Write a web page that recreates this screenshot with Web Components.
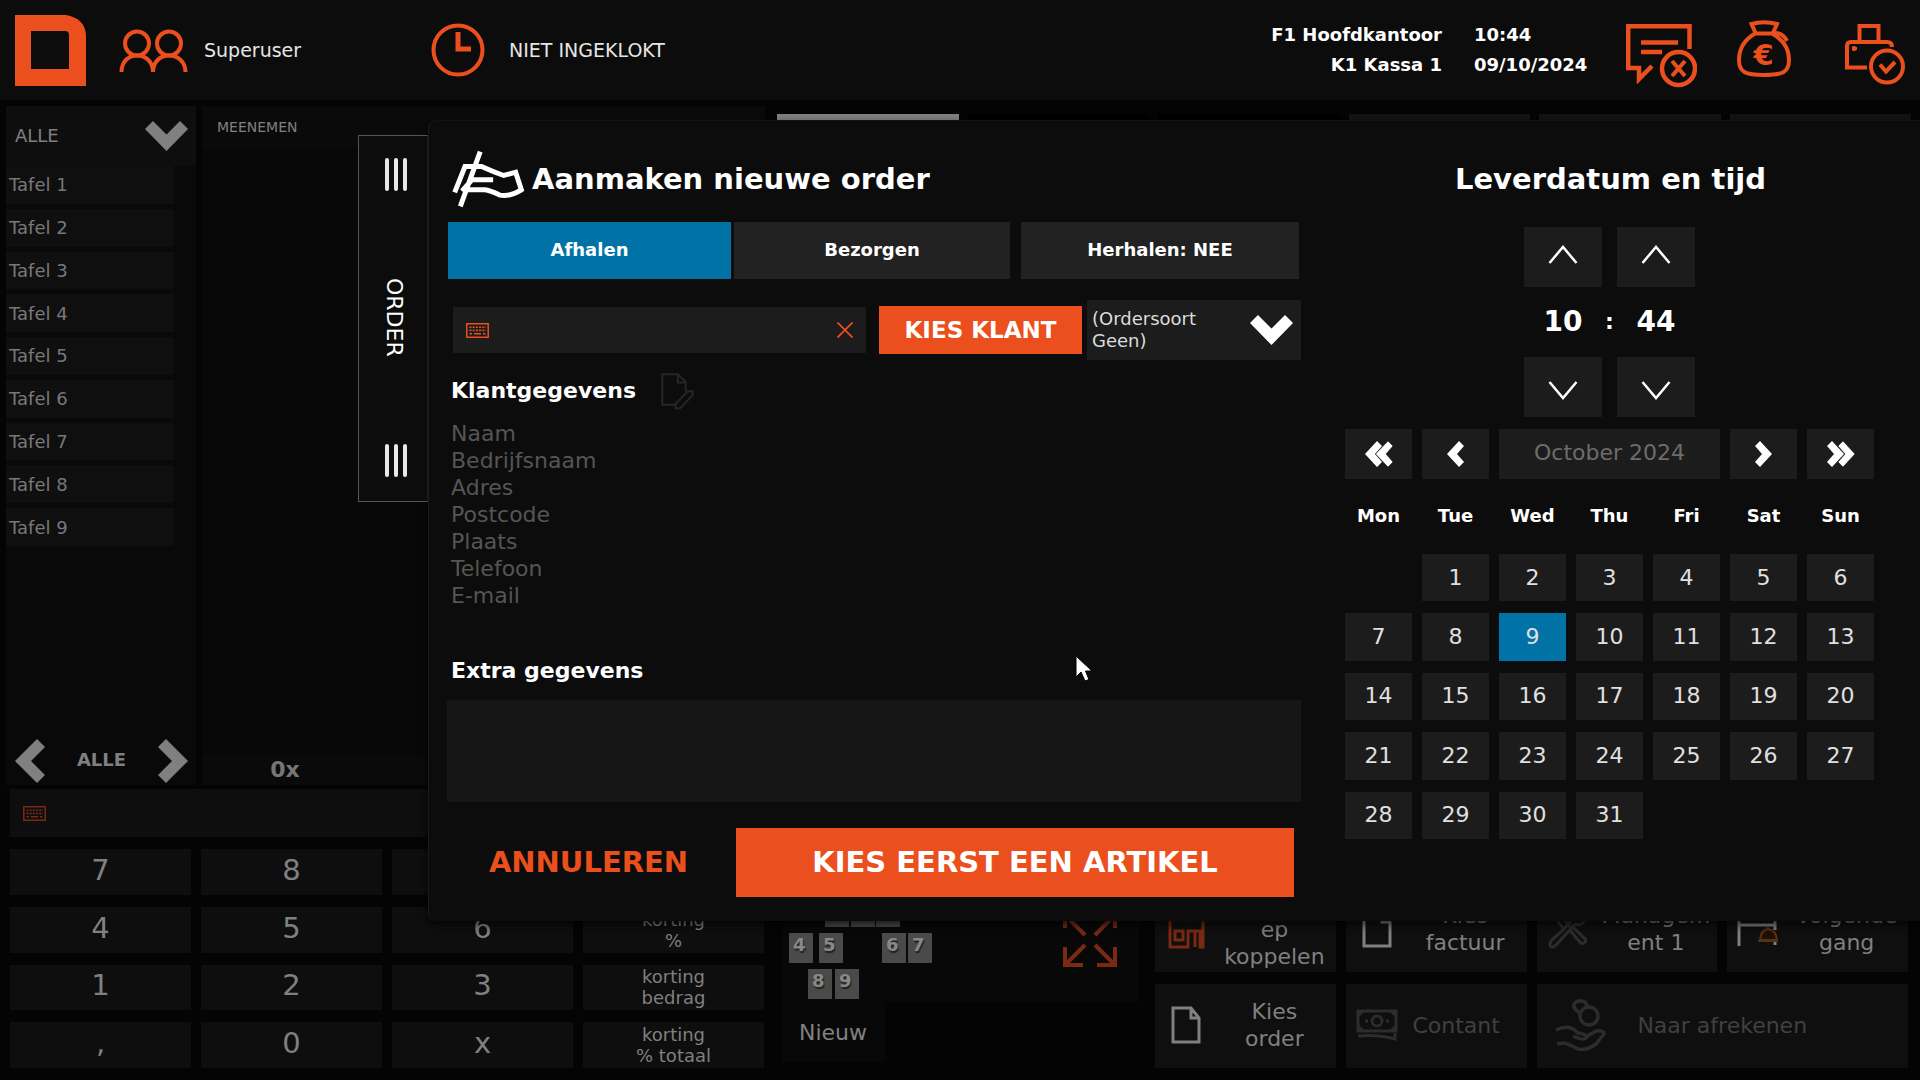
<!DOCTYPE html>
<html lang="nl">
<head>
<meta charset="utf-8">
<title>Kassa</title>
<style>
html,body{margin:0;height:100%;background:#040404;overflow:hidden}
body{font-family:Verdana,"DejaVu Sans",sans-serif;font-size:18px;color:#fff}
</style>
</head>
<body>
<pos-app></pos-app>
<script>
const BASE = `*{box-sizing:border-box}
button,input,select,textarea{font:inherit;color:inherit;border:0;border-radius:0;margin:0;padding:0;background:none;outline:0;appearance:none;min-width:0}
h2,h3,p,ul{margin:0;padding:0;font-weight:inherit;list-style:none}`;

function define(name, css, html) {
  const t = document.createElement('template');
  const make = v => { t.innerHTML = '<style>' + BASE + css + '</style>' + v; return t.content.cloneNode(true); };
  customElements.define(name, class extends HTMLElement {
    constructor() {
      super();
      this.attachShadow({ mode: 'open' });
    }
    connectedCallback() {
      if (!this.shadowRoot.childNodes.length)
        this.shadowRoot.append(make(typeof html === 'function' ? html(this) : html));
    }
  });
}

/* name: [width, height, viewBox, markup] */
const page = '<path fill="none" stroke="currentColor" stroke-width="3" d="M2 2H20L28 12V36H2ZM20 2V12H28"/>';
const kb = '<path fill="none" stroke="currentColor" stroke-width="1.5" d="M.8.8H22.2V14.2H.8Z"/><path stroke="currentColor" stroke-width="1.6" stroke-dasharray="2 1.2" d="M3.5 4.2H20M3.5 7.4H20"/><path stroke="currentColor" stroke-width="1.6" d="M3.5 10.8H6M8 10.8H15M17 10.8H19.5"/>';
const ICONS = {
  logo: [71, 71, '0 0 71 71', '<path fill="currentColor" fill-rule="evenodd" d="M0 0H51C63 2 71 9 71 21V71H0ZM16 16V54H54V20Q54 16 50 16Z"/>'],
  users: [69, 43, '119 28 69 43', '<g fill="none" stroke="currentColor" stroke-width="4"><circle cx="137" cy="42.500" r="12"/><circle cx="169" cy="42.500" r="12"/><path d="M121.500 71C121.500 61 128 54.500 137 54.500S153 61 153 71C153 61 160 54.500 169 54.500S185.500 61 185.500 71"/></g>'],
  clock: [54, 54, '0 0 54 54', '<g fill="none" stroke="currentColor" stroke-width="4"><circle cx="27" cy="27" r="24.500"/><path stroke-width="5" d="M27 9V26H40"/></g>'],
  message: [71, 68, '1626 20 71 68', '<g fill="none" stroke="currentColor" stroke-width="4.500"><path d="M1689.500 49V26.200H1628.200V68H1639V79L1652 66M1641 42.500H1678M1641 52H1662"/><circle cx="1678.500" cy="68.500" r="16.500"/><path stroke-width="4" d="M1672 61L1685 76M1685 61L1672 76"/></g>'],
  bag: [56, 68, '1736 20 56 68', '<g fill="none" stroke="currentColor" stroke-width="4"><path d="M1756 34L1751.500 24Q1764 20.500 1777 24L1772.500 34"/><path d="M1755 33.500H1772C1784 40 1789 50 1789 60C1789 72 1783 75 1764 75S1739 72 1739 60C1739 50 1744 40 1755 33.500ZM1772 33.500Q1782 31 1787 41"/></g><text x="1763.500" y="65" text-anchor="middle" font-size="29" font-weight="700" fill="currentColor">€</text>'],
  printer: [60, 68, '1845 20 60 68', '<g fill="none" stroke="currentColor" stroke-width="4"><path d="M1859.500 41V26H1878.500V41M1867 67.500H1847V46Q1847 42 1851 42H1887Q1892 42 1892 47"/><path stroke-width="3" d="M1854 46V51M1852 48.500H1857"/><circle cx="1887" cy="66.500" r="16"/><path d="M1880 64.500L1886 71.500L1895 62"/></g>'],
  down: [43, 30, '0 0 43 30', '<path fill="currentColor" d="M0 8L8 0L21.500 13.500L35 0L43 8L21.500 30Z"/>'],
  left: [30, 44, '0 0 30 44', '<path fill="currentColor" d="M22 0L30 8L16 22L30 36L22 44L0 22Z"/>'],
  right: [30, 44, '0 0 30 44', '<path fill="currentColor" d="M8 0L0 8L14 22L0 36L8 44L30 22Z"/>'],
  prev: [17, 26, '0 0 17 26', '<path fill="currentColor" d="M12 0L17 5L10 13L17 21L12 26L0 13Z"/>'],
  next: [17, 26, '0 0 17 26', '<path fill="currentColor" d="M5 0L0 5L7 13L0 21L5 26L17 13Z"/>'],
  first: [28, 26, '0 0 28 26', '<path fill="currentColor" d="M12 0L17 5L10 13L17 21L12 26L0 13Z"/><path fill="currentColor" stroke="#1c1c1c" stroke-width=".6" d="M23 0L28 5L21 13L28 21L23 26L10.500 13Z"/>'],
  last: [28, 26, '0 0 28 26', '<path fill="currentColor" d="M5 0L0 5L7 13L0 21L5 26L17 13Z"/><path fill="currentColor" stroke="#1c1c1c" stroke-width=".6" d="M16 0L11 5L18 13L11 21L16 26L28 13Z"/>'],
  up: [30, 20, '0 0 30 20', '<path fill="none" stroke="currentColor" stroke-width="2.500" d="M1.500 18L15 2L28.500 18"/>'],
  dn: [30, 20, '0 0 30 20', '<path fill="none" stroke="currentColor" stroke-width="2.500" d="M1.500 2L15 18L28.500 2"/>'],
  keyboard: [23, 15, '0 0 23 15', kb],
  cross: [16, 16, '0 0 16 16', '<path fill="none" stroke="currentColor" stroke-width="1.700" d="M.5.500L15.500 15.500M15.500.500L.5 15.500"/>'],
  order: [73, 58, '66 120 220 175', '<g fill="none" stroke="currentColor" stroke-width="15"><path d="M151 125L91 290M74 248L105 170H155Q190 186 222 197L258 187L275 240Q240 262 210 256Q180 242 165 240H108M96 244L126 210H190"/></g>'],
  edit: [33, 37, '690 40 100 110', '<g fill="none" stroke="currentColor" stroke-width="6"><path d="M732 135H694V43H741L765 66V96M741 43V68H765"/><path d="M734 146V132L772 94H786V106L748 146Z"/></g>'],
  page: [30, 38, '0 0 30 38', page],
  shop: [44, 40, '0 0 44 40', '<g fill="none" stroke="currentColor" stroke-width="3"><path d="M6 10V38H24V22H36V38H39V10M31 22V38M11 22H19V31H11ZM2 2H42V8q-3 5-6 1q-3 4-6 0q-3 4-6 0q-3 4-6 0q-3 4-6 0q-3 4-6 0q-4 3-4-1Z"/></g>'],
  tools: [40, 40, '0 0 40 40', '<g fill="none" stroke="currentColor" stroke-width="3"><path d="M15 19L4 5Q7 0 11 5L22 18M21 20L30 31Q35 37 37 33T36 29L25 18M15 21L3 32Q0 38 5 38L8 36L27 15Q35 18 38 8L32 11L29 8L33 2Q24 1 23 12Z"/></g>'],
  serve: [44, 34, '0 0 44 34', '<path fill="none" stroke="currentColor" stroke-width="3" d="M3 34V2M3 13H39M39 2V18M3 7H39V13M39 28V33"/><path fill="#1c1109" stroke="#5b3011" stroke-width="2" d="M22 29H42M24 28Q25 18 32 17Q40 18 41 28ZM32 14V17"/>'],
  cash: [42, 33, '0 0 42 33', '<g fill="none" stroke="currentColor" stroke-width="3"><path d="M2 2H40V22H2ZM2 27Q22 25 39 30V24M2 7L7 2M35 2L40 7M2 17L7 22M35 22L40 17"/><circle cx="21" cy="12" r="5"/><path d="M9 12H12M30 12H33"/></g>'],
  pay: [52, 52, '0 0 52 52', '<g fill="none" stroke="currentColor" stroke-width="3.500"><circle cx="35" cy="17" r="9"/><path d="M25 13Q19 10 20 5Q24 0 31 3L34 8M25 13L26 16M2 31Q12 26 19 30L24 34Q33 35 32 39Q30 42 19 37M32 38L42 32Q50 31 50 35L42 45Q32 52 24 50Q15 45 10 44L3 45"/></g>'],
  expand: [54, 54, '0 0 54 54', '<g fill="none" stroke="currentColor" stroke-width="4"><path d="M2 15V2H20M2 2L22 22M34 2H52V15M52 2L32 22M2 34V52H20M2 52L22 32M52 34V52H34M52 52L32 32"/></g>'],
  cursor: [18, 27, '0 0 18 27', '<path fill="#fff" stroke="#000" stroke-width="1" d="M1 1V22L6 17L10 26L14 24.500L10.500 16H17Z"/>'],
};
define('pos-icon', `:host{display:block;flex:none}svg{display:block}`, el => {
  const [w, h, vb, m] = ICONS[el.getAttribute('name')];
  return `<svg width="${w}" height="${h}" viewBox="${vb}" aria-hidden="true">${m}</svg>`;
});

define('pos-header', `
:host{display:flex;align-items:center;background:#0c0c0c;padding:0 15px;font-size:19px;color:#e6e6e6}
pos-icon{color:#ea4f1d}
.g{display:flex;align-items:center}
.user{gap:16px;width:312px;margin-left:33px}
.clock{gap:24px}
.info{margin-left:auto;display:grid;grid-template-columns:auto 130px;column-gap:32px;font:700 18px/30px Verdana,"DejaVu Sans",sans-serif;color:#fff;margin-right:22px}
.info :nth-child(odd){text-align:right}
button{display:block;color:inherit}
.act{padding-top:8px}
.act button+button{margin-left:39px}
.act button:last-child{margin-left:53px}`,
`<pos-icon name="logo"></pos-icon>
<div class="g user"><pos-icon name="users"></pos-icon><span>Superuser</span></div>
<div class="g clock"><pos-icon name="clock"></pos-icon><span>NIET INGEKLOKT</span></div>
<div class="info"><span>F1 Hoofdkantoor</span><span>10:44</span><span>K1 Kassa 1</span><span>09/10/2024</span></div>
<div class="g act"><button aria-label="Berichten"><pos-icon name="message"></pos-icon></button><button aria-label="Kas"><pos-icon name="bag"></pos-icon></button><button aria-label="Printer"><pos-icon name="printer"></pos-icon></button></div>`);

define('pos-select', `
:host{display:grid;align-items:center}
select,pos-icon{grid-area:1/1}
select{width:100%;height:100%;white-space:normal;line-height:22px;padding:0 80px 0 var(--pad,5px);background:none}
option{background:#1c1c1c}
pos-icon{justify-self:end;margin-right:8px;pointer-events:none;color:var(--arrow,inherit)}`,
el => `<select aria-label="${el.getAttribute('label')}"><option>${el.getAttribute('value')}</option></select><pos-icon name="down"></pos-icon>`);

define('table-list', `
:host{display:flex;flex-direction:column;background:#090909;width:190px;flex:none;color:#808080}
pos-select{--pad:9px;height:60px;background:#0e0e0e}
ul{display:grid;grid-auto-rows:1fr;gap:5px;height:380px;margin-right:22px}
li{display:grid}
li button{background:#0f0f0f;text-align:left;padding:0 3px;color:#787878}
.nav{margin-top:auto;display:flex;justify-content:space-between;align-items:center;padding:0 8px 2px 9px;font-weight:700}
.nav span{padding-bottom:3px}`,
`<pos-select label="Tafelgroep" value="ALLE"></pos-select>
<ul>${[1,2,3,4,5,6,7,8,9].map(n => `<li><button>Tafel ${n}</button></li>`).join('')}</ul>
<div class="nav"><button aria-label="Vorige"><pos-icon name="left"></pos-icon></button><span>ALLE</span><button aria-label="Volgende"><pos-icon name="right"></pos-icon></button></div>`);

define('order-list', `
:host{display:flex;flex-direction:column;background:#080808;flex:1;color:#808080}
.top{height:44px;padding:11px 15px;font-size:14px;line-height:20px;background:#0a0a0a;border-bottom:1px solid #050505}
.sum{margin-top:auto;height:32px;border-top:1px solid #050505;background:#0a0a0a;font:700 22px/32px Verdana,"DejaVu Sans",sans-serif}
.sum span{display:block;width:166px;text-align:center;color:#767676}`,
`<div class="top">MEENEMEN</div><div class="sum"><span>0x</span></div>`);

define('search-field', `
:host{display:flex;align-items:center;background:#0e0e0e;color:#ea4f1d}
input{flex:1;padding:0 10px;color:#fff;height:100%}`,
el => `<pos-icon name="keyboard"></pos-icon><input type="text" aria-label="${el.getAttribute('label')}"><slot></slot>`);

/* "-" marks a key that carries no label */
define('key-pad', `
:host{display:grid;grid-template-columns:repeat(4,1fr);grid-template-rows:repeat(4,1fr);gap:12px 10px;height:219px;color:#808080}
button{background:#0e0e0e;font-size:29px;line-height:40px;padding-bottom:4px;overflow:hidden}
.s{font-size:18px;line-height:21px;padding:0}`,
['7','8','-','-','4','5','6','korting<br>%','1','2','3','korting<br>bedrag',',','0','x','korting<br>% totaal'].map(k => k === '-' ? '<button></button>' : `<button${k.length > 1 ? ' class="s"' : ''}>${k}</button>`).join(''));

define('floor-plan', `
:host{display:flex;flex-direction:column;justify-content:flex-end;color:#808080}
.plan{position:relative;height:102px;background:#080808}
.plan button{position:absolute;width:24px;height:30px;background:#4a4a4a;font:700 18px/22px Verdana,"DejaVu Sans",sans-serif;text-align:left;padding:0 0 6px 4px;text-shadow:1px 2px 1px #222;color:#888}
.plan .x{background:none;left:auto;right:22px;top:13px;width:54px;height:54px;padding:0;color:#7a2a10}
.new{background:#080808;width:102px;height:60px;font-size:22px;color:#808080;padding:0 2px 0 0}`,
`<div class="plan">${[['',42,-3],['',68,-3],['',93,-3],['4',6,33],['5',36,33],['6',99,33],['7',125,33],['8',25,69],['9',52,69]].map(([n,x,y]) => `<button style="left:${x}px;top:${y}px">${n}</button>`).join('')}
<button class="x" aria-label="Vergroten"><pos-icon name="expand"></pos-icon></button></div>
<button class="new">Nieuw</button>`);

define('action-tile', `
:host{display:grid;background:#0f0f0f;color:#808080}
:host([off]) button{color:#404040}
:host([off]) pos-icon,:host([dim]) pos-icon{color:#2c2c2c}
button{display:grid;grid-template-columns:62px 1fr;align-items:center;font-size:22px;line-height:27px;text-align:center;overflow:hidden;padding:0 4px 2px 0}
pos-icon{justify-self:center}
:host([tight]) button{padding-right:22px}
:host([wide]) button{grid-template-columns:86px 1fr;padding-right:86px}
:host([accent]) pos-icon{color:#7a2a10}`,
el => `<button><pos-icon name="${el.getAttribute('icon')}"></pos-icon><span><slot></slot></span></button>`);

define('action-grid', `
:host{display:grid;grid-template-columns:repeat(4,1fr);grid-auto-rows:84px;gap:12px 10px;align-content:end}
[wide]{grid-column:span 2}`,
`<action-tile icon="shop" accent><br>ep<br>koppelen</action-tile>
<action-tile icon="page">Kies<br>factuur</action-tile>
<action-tile icon="tools" dim>Managem<br>ent 1</action-tile>
<action-tile icon="serve">Volgende<br>gang</action-tile>
<action-tile icon="page">Kies<br>order</action-tile>
<action-tile icon="cash" off tight>Contant</action-tile>
<action-tile icon="pay" off wide>Naar afrekenen</action-tile>`);

define('time-spinner', `
:host{display:grid;grid-template-columns:78px 78px;column-gap:15px;justify-content:center}
button{height:60px;background:#1c1c1c;display:grid;place-items:center}
button.d{padding-top:6px}button.u{padding-bottom:4px}
.v{grid-column:1/-1;display:grid;grid-template-columns:78px 15px 78px;height:70px;align-items:center;text-align:center;font:700 28px/36px Verdana,"DejaVu Sans",sans-serif}
.c{font-size:22px}`,
`<button class="u" aria-label="Uur omhoog"><pos-icon name="up"></pos-icon></button><button class="u" aria-label="Minuut omhoog"><pos-icon name="up"></pos-icon></button>
<div class="v"><span>10</span><span class="c">:</span><span>44</span></div>
<button class="d" aria-label="Uur omlaag"><pos-icon name="dn"></pos-icon></button><button class="d" aria-label="Minuut omlaag"><pos-icon name="dn"></pos-icon></button>`);

define('date-picker', `
:host{display:block;font-size:22px;color:#e0e0e0;padding-top:12px}
.r{display:grid;grid-template-columns:repeat(7,1fr);column-gap:10px}
button{background:#1c1c1c;display:grid;place-items:center;line-height:26px}
.nav{height:50px;color:#fff}
.m{grid-column:span 3;color:#6c6c6c;background:#1c1c1c;text-align:center;line-height:48px}
.h{height:75px;padding-bottom:3px;align-items:center;text-align:center;font-weight:700;font-size:18px;color:#fff}
.days{height:285px;grid-template-rows:repeat(5,1fr);row-gap:12px}
.days button:first-child{grid-column:2}
.on{background:#0072a5}`,
`<div class="r nav"><button aria-label="Vorig jaar"><pos-icon name="first"></pos-icon></button><button aria-label="Vorige maand"><pos-icon name="prev"></pos-icon></button><span class="m">October 2024</span><button aria-label="Volgende maand"><pos-icon name="next"></pos-icon></button><button aria-label="Volgend jaar"><pos-icon name="last"></pos-icon></button></div>
<div class="r h">${['Mon','Tue','Wed','Thu','Fri','Sat','Sun'].map(d => `<span>${d}</span>`).join('')}</div>
<div class="r days">${Array.from({ length: 31 }, (_, i) => `<button${i === 8 ? ' class="on"' : ''}>${i + 1}</button>`).join('')}</div>`);

define('order-handle', `
:host{display:flex;flex-direction:column;align-items:center;justify-content:space-between;width:70px;height:367px;padding:22px 0 24px 5px;background:#0c0c0c;border:1px solid #555;border-right-color:#1a1a1a}
.b{display:flex;gap:5px}
.b i{width:4px;height:33px;border-radius:2px;background:#e8e8e8}
span{writing-mode:vertical-rl;font-size:22px;line-height:26px;padding-right:4px}`,
`<div class="b"><i></i><i></i><i></i></div><span>ORDER</span><div class="b"><i></i><i></i><i></i></div>`);

define('order-dialog', `
:host{display:grid;grid-template-columns:854fr 619fr;background:#0c0c0c;padding:30px 0 24px 18px;border-left:1px solid #1a1a1a;border-top:1px solid #131313;border-radius:8px 0 0 8px;box-shadow:0 4px 10px #000a}
order-handle{position:absolute;left:-71px;top:14px}
h2{display:flex;align-items:center;gap:7px;height:58px;font:700 29px/40px Verdana,"DejaVu Sans",sans-serif;padding:0 0 2px 5px}
.cal h2{justify-content:center;padding-left:0;margin-bottom:18px}
.tabs{display:grid;grid-template-columns:286fr 287fr 278fr;margin-top:13px;padding:0 2px 0 1px;height:57px;font-weight:700}
.tabs button{background:#222;padding-bottom:3px}
.tabs button:nth-child(1){margin-right:3px}
.tabs button:nth-child(2){margin-right:11px}
.tabs .on{background:#0072a5}
.row{display:grid;grid-template-columns:426fr 208fr 214fr;align-items:center;margin-top:21px;padding-left:6px;height:60px}
search-field{height:46px;padding:0 13px;background:#1c1c1c;margin-right:13px}
.kk{background:#ea4f1d;height:48px;font-weight:700;font-size:23px;margin-right:5px}
pos-select{background:#1c1c1c;height:60px;color:#dcdcdc;--arrow:#fff}
h3{font:700 22px/30px Verdana,"DejaVu Sans",sans-serif;padding-left:4px}
.kg{display:flex;align-items:center;gap:25px;height:38px;margin-top:12px}
.kg h3{padding-bottom:1px}
.kg button{color:#262626}
ul{margin-top:10px;padding-left:4px;font-size:22px;line-height:27px;color:#555}
.ex{margin-top:47px}
textarea{display:block;width:100%;height:102px;background:#161616;resize:none;margin-top:14px;padding:10px}
.foot{display:grid;grid-template-columns:283fr 558fr;gap:6px;margin-top:26px;padding-right:7px;height:69px;font-size:29px;font-weight:700}
.foot button{padding-bottom:2px}
.foot .a{color:#ea4f1d}
.foot .k{background:#ea4f1d}
date-picker{margin:0 46px 0 44px}
time-spinner{padding-right:2px}`,
`<order-handle></order-handle>
<section><h2><pos-icon name="order"></pos-icon>Aanmaken nieuwe order</h2>
<div class="tabs"><button class="on">Afhalen</button><button>Bezorgen</button><button>Herhalen: NEE</button></div>
<div class="row"><search-field label="Klant zoeken"><button aria-label="Wissen"><pos-icon name="cross"></pos-icon></button></search-field><button class="kk">KIES KLANT</button><pos-select label="Ordersoort" value="(Ordersoort Geen)"></pos-select></div>
<div class="kg"><h3>Klantgegevens</h3><button aria-label="Bewerken"><pos-icon name="edit"></pos-icon></button></div>
<ul><li>Naam</li><li>Bedrijfsnaam</li><li>Adres</li><li>Postcode</li><li>Plaats</li><li>Telefoon</li><li>E-mail</li></ul>
<h3 class="ex"><label for="x">Extra gegevens</label></h3><textarea id="x"></textarea>
<div class="foot"><button class="a">ANNULEREN</button><button class="k">KIES EERST EEN ARTIKEL</button></div></section>
<section class="cal"><h2>Leverdatum en tijd</h2><time-spinner></time-spinner><date-picker></date-picker></section>`);

define('pos-app', `
:host{display:grid;grid-template-rows:100px 1fr;height:100vh;position:relative}
main{display:grid;grid-template-columns:759fr 1134fr;gap:12px;padding:6px 9px 12px 6px;min-height:0}
.l{display:flex;flex-direction:column}
.top{flex:1;display:flex;gap:6px}
.l search-field{height:48px;margin:4px 0 12px 4px;padding-left:13px;color:#7a2a10}
key-pad{margin:0 1px 0 4px}
.r{display:flex;flex-direction:column;padding-top:8px}
.tabs{display:grid;grid-template-columns:repeat(6,1fr);gap:9px}
.tabs i{height:40px;background:#131313}
.tabs i:first-child{background:#808080}
.tabs i:nth-child(2),.tabs i:nth-child(3){background:#000}
.w{flex:1;display:grid;grid-template-columns:356fr 753fr;gap:16px;padding:0 3px 0 6px}
floor-plan{margin-bottom:6px}
order-dialog{position:absolute;left:428px;right:0;top:120px}
.cur{position:absolute;left:1075px;top:655px}`,
`<pos-header></pos-header>
<main><div class="l"><div class="top"><table-list></table-list><order-list></order-list></div><search-field label="Zoeken"></search-field><key-pad></key-pad></div>
<div class="r"><div class="tabs"><i></i><i></i><i></i><i></i><i></i><i></i></div><div class="w"><floor-plan></floor-plan><action-grid></action-grid></div></div></main>
<order-dialog></order-dialog><pos-icon class="cur" name="cursor"></pos-icon>`);
</script>
</body>
</html>
